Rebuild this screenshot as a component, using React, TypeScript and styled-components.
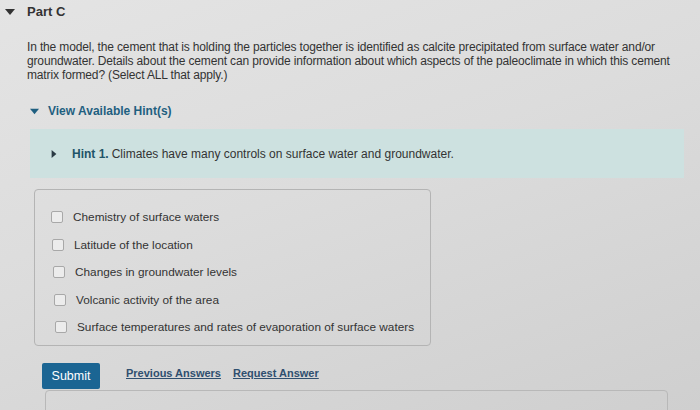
import styled, { createGlobalStyle } from 'styled-components';

const GlobalStyle = createGlobalStyle`
  html, body {
    margin: 0;
    padding: 0;
    width: 700px;
    height: 410px;
    overflow: hidden;
  }
  body {
    font-family: 'Liberation Sans', Arial, sans-serif;
    background: linear-gradient(160deg, #e4e4e4 0%, #dcdcdc 45%, #cfcfcf 100%);
    color: #2e2e2e;
  }
`;

const options: string[] = [
  'Chemistry of surface waters',
  'Latitude of the location',
  'Changes in groundwater levels',
  'Volcanic activity of the area',
  'Surface temperatures and rates of evaporation of surface waters',
];

const Page = styled.div`
  width: 700px;
  height: 410px;
  box-sizing: border-box;
  padding: 4px 0 0 0;
  display: flex;
  flex-direction: column;
`;

const PartHeader = styled.div`
  display: flex;
  align-items: center;
  gap: 12px;
  padding-left: 5px;
  height: 18px;
`;

const PartTitle = styled.span`
  font-size: 13px;
  font-weight: bold;
  color: #333;
`;

const Body = styled.div`
  padding: 0 16px 0 27px;
  display: flex;
  flex-direction: column;
`;

const Question = styled.p`
  margin: 21px 0 0 0;
  font-size: 12px;
  line-height: 14px;
  color: #333;
  letter-spacing: -0.15px;
`;

const HintToggle = styled.div`
  display: flex;
  align-items: center;
  gap: 9px;
  margin: 22px 0 0 3px;
  font-size: 12px;
  font-weight: bold;
  color: #1f5f80;
`;

const HintBox = styled.div`
  margin: 11px 0 0 3px;
  width: 654px;
  height: 49px;
  box-sizing: border-box;
  background: #cde1e0;
  display: flex;
  align-items: center;
  padding-left: 20px;
  gap: 14px;
  font-size: 12px;
  color: #333;
`;

const HintLabel = styled.b`
  color: #1f5468;
  margin-right: 3px;
`;

const OptionsBox = styled.div`
  margin: 11px 0 0 7px;
  width: 397px;
  height: 157px;
  box-sizing: border-box;
  border: 1px solid #b4b4b4;
  border-radius: 4px;
  padding: 20px 0 0 16px;
  display: flex;
  flex-direction: column;
  gap: 13.5px;
`;

const OptionRow = styled.label<{ $shift: number }>`
  display: flex;
  align-items: center;
  gap: 10px;
  height: 14px;
  padding-left: ${p => p.$shift}px;
  font-size: 11.8px;
  color: #333;
`;

const Box = styled.span`
  width: 10px;
  height: 10px;
  border: 1px solid #a8a8a8;
  border-radius: 2px;
  background: #ececec;
  flex-shrink: 0;
`;

const Actions = styled.div`
  display: flex;
  align-items: center;
  gap: 12px;
  margin: 17px 0 0 15px;
`;

const SubmitButton = styled.button`
  width: 58px;
  height: 26px;
  border: none;
  border-radius: 2px;
  background: #1b6593;
  color: #fff;
  font-family: inherit;
  font-size: 12.5px;
  padding: 0;
  margin-right: 14px;
`;

const ActionLink = styled.a`
  font-size: 11px;
  font-weight: bold;
  color: #2f4f6f;
  text-decoration: underline;
  margin-top: -6px;
`;

const FeedbackBox = styled.div`
  margin: 1px 0 0 18px;
  width: 623px;
  height: 40px;
  box-sizing: border-box;
  border: 1px solid #b8b8b8;
  border-radius: 4px;
`;

function Triangle({ dir, size, color }: { dir: 'down' | 'right'; size: number; color: string }) {
  return (
    <svg width={size} height={size} viewBox="0 0 10 10">
      {dir === 'down'
        ? <path d="M0 2 L10 2 L5 8 Z" fill={color} />
        : <path d="M2 0 L8 5 L2 10 Z" fill={color} />}
    </svg>
  );
}

export default function App() {
  return (
    <>
      <GlobalStyle />
      <Page>
        <PartHeader>
          <Triangle dir="down" size={10} color="#333" />
          <PartTitle>Part C</PartTitle>
        </PartHeader>
        <Body>
          <Question>
            In the model, the cement that is holding the particles together is identified as calcite precipitated from surface water and/or
            groundwater. Details about the cement can provide information about which aspects of the paleoclimate in which this cement
            matrix formed? (Select ALL that apply.)
          </Question>
          <HintToggle>
            <Triangle dir="down" size={9} color="#1f5f80" />
            View Available Hint(s)
          </HintToggle>
          <HintBox>
            <Triangle dir="right" size={8} color="#2a3a44" />
            <span>
              <HintLabel>Hint 1.</HintLabel>
              Climates have many controls on surface water and groundwater.
            </span>
          </HintBox>
          <OptionsBox>
            {options.map((item, index) => (
              <OptionRow key={index} $shift={index}>
                <Box />
                {item}
              </OptionRow>
            ))}
          </OptionsBox>
          <Actions>
            <SubmitButton>Submit</SubmitButton>
            <ActionLink>Previous Answers</ActionLink>
            <ActionLink>Request Answer</ActionLink>
          </Actions>
          <FeedbackBox />
        </Body>
      </Page>
    </>
  );
}
